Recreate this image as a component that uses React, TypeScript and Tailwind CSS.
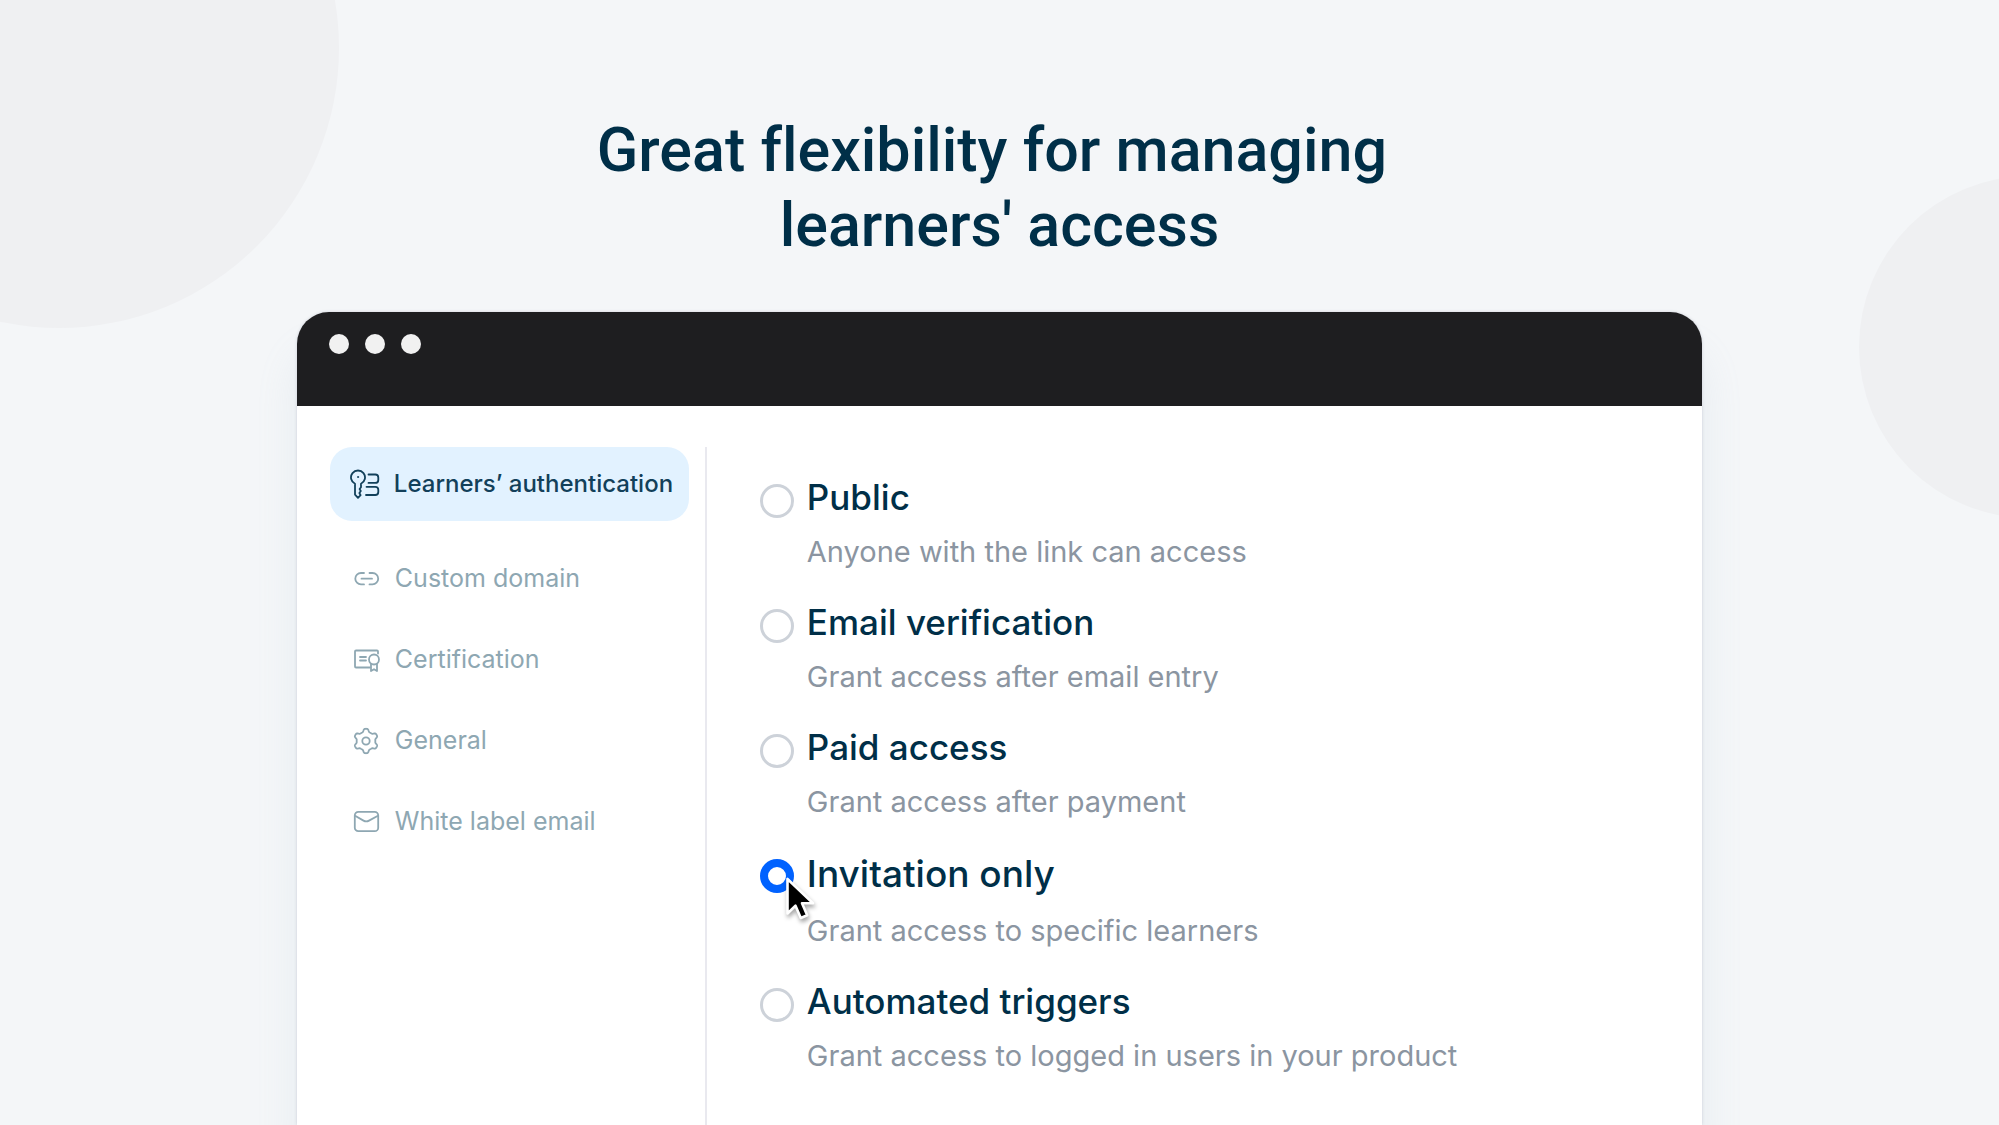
import { useState } from 'react';
import clsx from 'clsx';

const OPTIONS = [
  { id: 'public',     title: 'Public',             text: 'Anyone with the link can access' },
  { id: 'email',      title: 'Email verification', text: 'Grant access after email entry' },
  { id: 'paid',       title: 'Paid access',        text: 'Grant access after payment' },
  { id: 'invitation', title: 'Invitation only',    text: 'Grant access to specific learners' },
  { id: 'triggers',   title: 'Automated triggers', text: 'Grant access to logged in users in your product' },
];

const STROKE = {
  fill: 'none',
  stroke: 'currentColor',
  strokeWidth: 1.8,
  strokeLinecap: 'round',
  strokeLinejoin: 'round',
} as const;

// Outline of a soft gear with six teeth
const GEAR = Array.from({ length: 120 }, (_, i) => {
  const a = (i * Math.PI) / 60;
  const r = 10.8 - 1.5 * Math.tanh(2.2 * Math.cos(6 * a) + 0.3);
  return `${(15 + r * Math.cos(a)).toFixed(2)},${(15 + r * Math.sin(a)).toFixed(2)}`;
}).join(' ');

function KeyIcon() {
  return (
    <svg viewBox="0 0 30 30" className="w-[30px] h-[30px] shrink-0" {...STROKE}>
      <path d="M5 14.8V25.6l3 3.2 2.6-2.6-1.2-2.2 1.4-2-1.2-2 1.4-1.8v-3.4a7 7 0 1 0-6 0Z" />
      <circle cx="8" cy="8" r="0.6" fill="currentColor" strokeWidth={0.8} />
      <path d="M18.5 5.5h6.8a3 3 0 0 1 3 3v2.4a3 3 0 0 1-3 3h-6.8" />
      <path d="M16.5 17.8h8.8a3 3 0 0 1 3 3v2.2a3 3 0 0 1-3 3h-9.3" />
    </svg>
  );
}

function LinkIcon() {
  return (
    <svg viewBox="0 0 30 30" className="w-[30px] h-[30px]" {...STROKE}>
      <path d="M13 9H10a5.700 5.700 0 0 0 0 11.400H13M18.500 9h3a5.700 5.700 0 0 1 0 11.400h-3M10.500 14.700h10.500" />
    </svg>
  );
}

function CertificateIcon() {
  return (
    <svg viewBox="0 0 30 30" className="w-[30px] h-[30px]" {...STROKE}>
      <path d="M27 8.5v-2a1 1 0 0 0-1-1H5a1 1 0 0 0-1 1v15a1 1 0 0 0 1 1h14" />
      <path d="M9 12h6M9 15.5h6" />
      <circle cx="23" cy="14.5" r="5" />
      <path d="M20 18.8V26l3-1.8 3 1.8v-7.2" />
    </svg>
  );
}

function GearIcon() {
  return (
    <svg viewBox="0 0 30 30" className="w-[30px] h-[30px]" {...STROKE}>
      <polygon points={GEAR} />
      <circle cx="15" cy="15" r="3.7" />
    </svg>
  );
}

function MailIcon() {
  return (
    <svg viewBox="0 0 30 30" className="w-[30px] h-[30px]" {...STROKE}>
      <rect x="3.8" y="4.8" width="23.4" height="19.4" rx="3.5" />
      <path d="M4.500 9l8 4.600a5.500 5.500 0 0 0 5.500 0L26.500 9" />
    </svg>
  );
}

const NAV = [
  { label: 'Custom domain',     icon: <LinkIcon /> },
  { label: 'Certification',     icon: <CertificateIcon /> },
  { label: 'General',           icon: <GearIcon /> },
  { label: 'White label email', icon: <MailIcon /> },
];

function Cursor() {
  return (
    <svg
      viewBox="0 0 32 48"
      className="absolute left-[25px] top-[26px] w-8 h-12 pointer-events-none drop-shadow-[1px_3px_2px_rgba(0,0,0,0.35)]"
    >
      <path
        d="M2.5 3v34.5l8-7.8 5.3 12.3 6.4-2.8-5.2-12h11Z"
        fill="#000"
        stroke="#fff"
        strokeWidth="2.6"
        strokeLinejoin="round"
      />
    </svg>
  );
}

export default function App() {
  const [selected, setSelected] = useState('invitation');

  return (
    <div className="relative min-h-screen overflow-hidden flex flex-col bg-[#f4f6f8] font-['Inter',sans-serif]">
      <div className="absolute -left-[221px] -top-[232px] size-[560px] rounded-full bg-[#eff0f2]" />
      <div className="absolute -right-[202px] top-[176px] size-[342px] rounded-full bg-[#eff0f2]" />

      <h1 className="relative pt-[113px] pb-[49px] text-center text-[61px] leading-[75px] font-medium text-[#002f48] font-['Roboto',sans-serif] [font-variant-ligatures:none]">
        Great flexibility for managing&nbsp;
        <br />
        learners' access
      </h1>

      <main className="relative grow flex flex-col w-[70.3%] mx-auto bg-white rounded-t-[32px] shadow-[0_40px_40px_rgba(160,185,205,0.16),0_0_3px_rgba(90,100,130,0.25)]">
        <div className="flex gap-4 h-[94px] px-8 pt-[22px] bg-[#1e1e20] rounded-t-[32px]">
          <span className="size-5 rounded-full bg-[#f1f1f1]" />
          <span className="size-5 rounded-full bg-[#f1f1f1]" />
          <span className="size-5 rounded-full bg-[#f1f1f1]" />
        </div>

        <div className="grow flex pt-[41px] pl-[33px]">
          <nav className="shrink-0 pr-4 border-r-2 border-[#e9e9ef]">
            <a
              href="#authentication"
              aria-current="page"
              className="flex items-center gap-[14px] w-[359px] h-[74px] pl-5 rounded-[22px] bg-[#e2f2ff] text-2xl font-medium whitespace-nowrap text-[#12405a]"
            >
              <KeyIcon />
              Learners’ authentication
            </a>
            <ul className="mt-[17px]">
              {NAV.map((item) => (
                <li key={item.label}>
                  <a
                    href="#settings"
                    className="flex items-center gap-[14px] h-[81px] pl-[21px] text-[25px] text-[#8ea7b2]"
                  >
                    {item.icon}
                    {item.label}
                  </a>
                </li>
              ))}
            </ul>
          </nav>

          <form className="flex flex-col gap-8 pt-7 pl-[53px]">
            {OPTIONS.map((opt) => {
              const active = opt.id === selected;
              return (
                <div key={opt.id} className="relative flex items-start gap-[13px]">
                  <input
                    type="radio"
                    name="access"
                    id={opt.id}
                    checked={active}
                    onChange={() => setSelected(opt.id)}
                    className="appearance-none shrink-0 mt-[9px] size-[34px] rounded-full bg-white border-[3px] border-[#cdd2d9] checked:border-8 checked:border-[#0062ff]"
                  />
                  <label htmlFor={opt.id} className="flex flex-col gap-4">
                    <span
                      className={clsx(
                        'font-medium text-[#002f48]',
                        active ? 'text-[37px] leading-[48px]' : 'text-[35px] leading-[44px]'
                      )}
                    >
                      {opt.title}
                    </span>
                    <span className="text-[29px] leading-[33px] text-[#8b95a1]">{opt.text}</span>
                  </label>
                  {active && <Cursor />}
                </div>
              );
            })}
          </form>
        </div>
      </main>
    </div>
  );
}
